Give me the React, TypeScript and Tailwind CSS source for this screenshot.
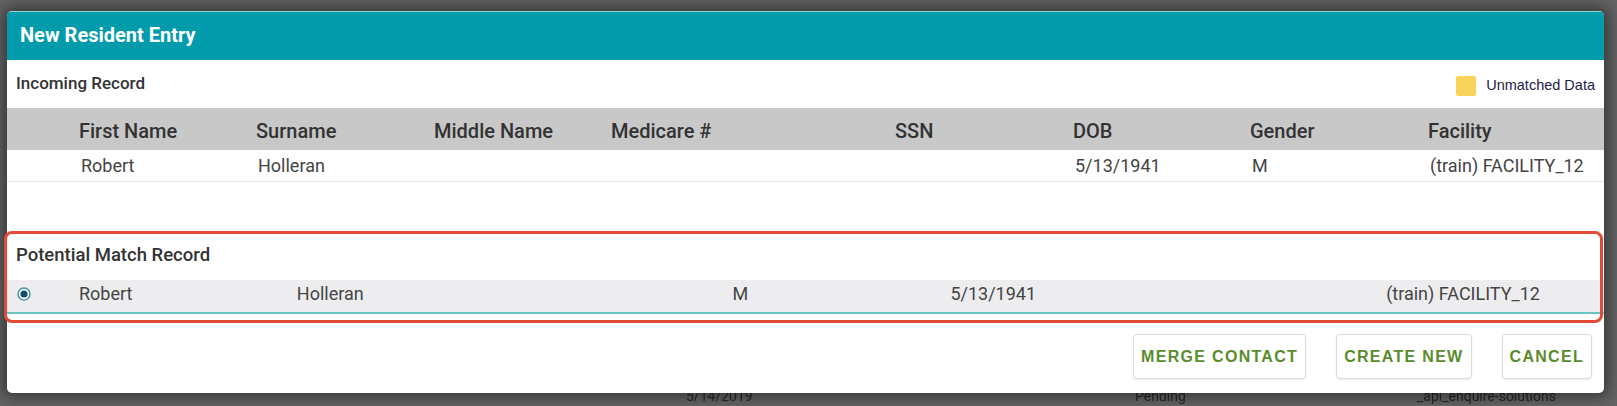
import React from 'react';

const incomingCols = ['First Name', 'Surname', 'Middle Name', 'Medicare #', 'SSN', 'DOB', 'Gender', 'Facility'];
const incomingRow = ['Robert', 'Holleran', '', '', '', '5/13/1941', 'M', '(train) FACILITY_12'];
const matchRow = ['Robert', 'Holleran', '', 'M', '5/13/1941', '', '(train) FACILITY_12'];

const RadioOn = () => (
  <svg width="14" height="14" viewBox="0 0 14 14">
    <circle cx="7" cy="7" r="6" fill="#ffffff" stroke="#4a93a6" strokeWidth="1.5" />
    <circle cx="7" cy="7" r="3.6" fill="#134e6c" />
  </svg>
);

const ActionButton = ({ label }: { label: string }) => (
  <button className="h-[45px] px-[7px] rounded-[4px] border border-[#dcdcdc] bg-white shadow-[0_1px_2px_rgba(0,0,0,0.08)] text-[16px] font-bold tracking-[1.3px] text-[#5b8c2c] font-['Liberation_Sans',Arial,sans-serif]">
    {label}
  </button>
);

export default function App() {
  return (
    <div className="relative w-[1617px] h-[406px] overflow-hidden bg-[#636363] font-['Roboto',sans-serif]">
      {/* page behind the modal */}
      <div className="flex h-full flex-col justify-end pb-[2px] blur-[0.4px]">
        <div className="grid grid-cols-[686px_449px_282px_1fr] text-[14px] leading-[16px] text-[#262626]">
          <span />
          <span>5/14/2019</span>
          <span>Pending</span>
          <span>_api_enquire-solutions</span>
        </div>
      </div>

      {/* modal */}
      <div className="absolute left-[7px] top-[11px] w-[1597px] h-[382px] flex flex-col rounded-[5px] bg-white shadow-[0_0_14px_4px_rgba(0,0,0,0.45)] overflow-hidden">
        <div className="h-[49px] shrink-0 flex items-center pl-[13px] pb-[3px] bg-[#019bab] border-t border-[#8fd6db]">
          <span className="text-[20px] font-bold text-white">New Resident Entry</span>
        </div>

        <div className="h-[48px] shrink-0 flex items-center justify-between pl-[9px] pr-[9px]">
          <span className="text-[17px] font-medium text-[#333333]">Incoming Record</span>
          <div className="flex items-center gap-[10px] pt-[3px]">
            <span className="w-[20px] h-[20px] rounded-[2px] bg-[#f8d35a]" />
            <span className="text-[14.5px] text-[#222244] font-['Liberation_Sans',Arial,sans-serif]">Unmatched Data</span>
          </div>
        </div>

        <div className="h-[42px] shrink-0 grid grid-cols-[72px_177px_178px_177px_284px_178px_177px_178px_1fr] items-center bg-[#c8c8c8] pt-[4px]">
          <span />
          {incomingCols.map((c) => (
            <span key={c} className="text-[20px] font-medium text-[#333333]">{c}</span>
          ))}
        </div>

        <div className="h-[32px] shrink-0 grid grid-cols-[72px_177px_178px_177px_284px_178px_177px_178px_1fr] items-center border-b border-[#e6e6e6]">
          <span />
          {incomingRow.map((v, i) => (
            <span key={i} className="pl-[2px] text-[18px] text-[#444444]">{v}</span>
          ))}
        </div>

        <div className="h-[49px] shrink-0" />

        <div className="h-[49px] shrink-0 flex items-center pl-[9px]">
          <span className="text-[18.5px] font-medium text-[#333333]">Potential Match Record</span>
        </div>

        <div className="h-[34px] shrink-0 grid grid-cols-[72px_repeat(7,1fr)] items-center pb-[6px] bg-[#ededf0] border-b-2 border-[#6cc3c3]">
          <span className="flex pl-[10px]">
            <RadioOn />
          </span>
          {matchRow.map((v, i) => (
            <span key={i} className="text-[18px] text-[#444444]">{v}</span>
          ))}
        </div>

        <div className="flex justify-end gap-[30px] pt-[20px] pr-[12px]">
          <ActionButton label="MERGE CONTACT" />
          <ActionButton label="CREATE NEW" />
          <ActionButton label="CANCEL" />
        </div>
      </div>

      {/* highlight annotation */}
      <div className="absolute left-[4px] top-[231px] w-[1599px] h-[92px] rounded-[8px] border-[3px] border-[#e24b36]" />
    </div>
  );
}
